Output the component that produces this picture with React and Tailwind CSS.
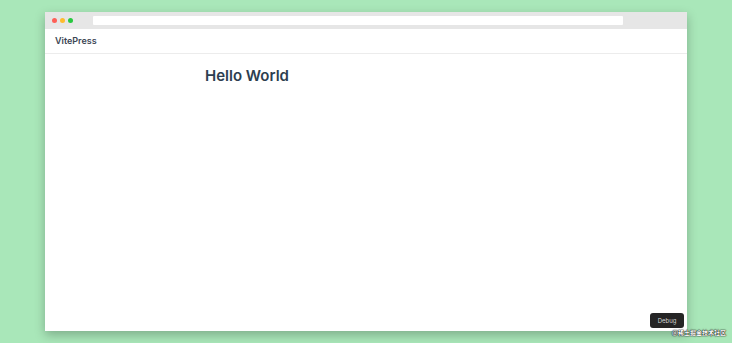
import React from 'react';

export default function App() {
    return (
        <div className="relative w-[732px] h-[343px] bg-[#a9e7b9] pt-[12px] pl-[45px] overflow-hidden font-['Inter',sans-serif]">
            {/* Browser window */}
            <div className="relative w-[642px] h-[319px] bg-white flex flex-col shadow-[0_4px_10px_rgba(0,0,0,0.25)]">
                {/* Title bar */}
                <div className="h-[17px] bg-[#e6e6e6] flex items-center pl-[7px]">
                    <div className="flex gap-[3px]">
                        <span className="w-[5px] h-[5px] rounded-full bg-[#fe5f57]" />
                        <span className="w-[5px] h-[5px] rounded-full bg-[#febc2e]" />
                        <span className="w-[5px] h-[5px] rounded-full bg-[#28c840]" />
                    </div>
                    <div className="ml-[20px] w-[530px] h-[9px] bg-white rounded-[1px]" />
                </div>

                {/* Nav bar */}
                <div className="h-[25px] border-b border-[#ececec] flex items-center px-[10px]">
                    <span className="text-[9px] font-semibold text-[#3c4654]">VitePress</span>
                </div>

                {/* Content */}
                <div className="flex-1 pl-[160px] pt-[12px]">
                    <h1 className="text-[15px] leading-[20px] font-semibold text-[#2c3e50]">Hello World</h1>
                </div>

                {/* Debug button */}
                <button className="absolute right-[3px] bottom-[3px] w-[34px] h-[15px] rounded-[3px] bg-[#252525] text-[6px] text-[#d4d4d4] flex items-center justify-center">
                    Debug
                </button>
            </div>

            {/* Watermark */}
            <span className="absolute left-[672px] top-[328px] text-[6px] leading-[9px] font-bold text-white whitespace-nowrap [text-shadow:0_0_1px_#000,0_0_1px_#000,0_0_2px_rgba(0,0,0,0.5)] font-['Noto_Sans_CJK_SC',sans-serif]">
                @稀土掘金技术社区
            </span>
        </div>
    );
}
